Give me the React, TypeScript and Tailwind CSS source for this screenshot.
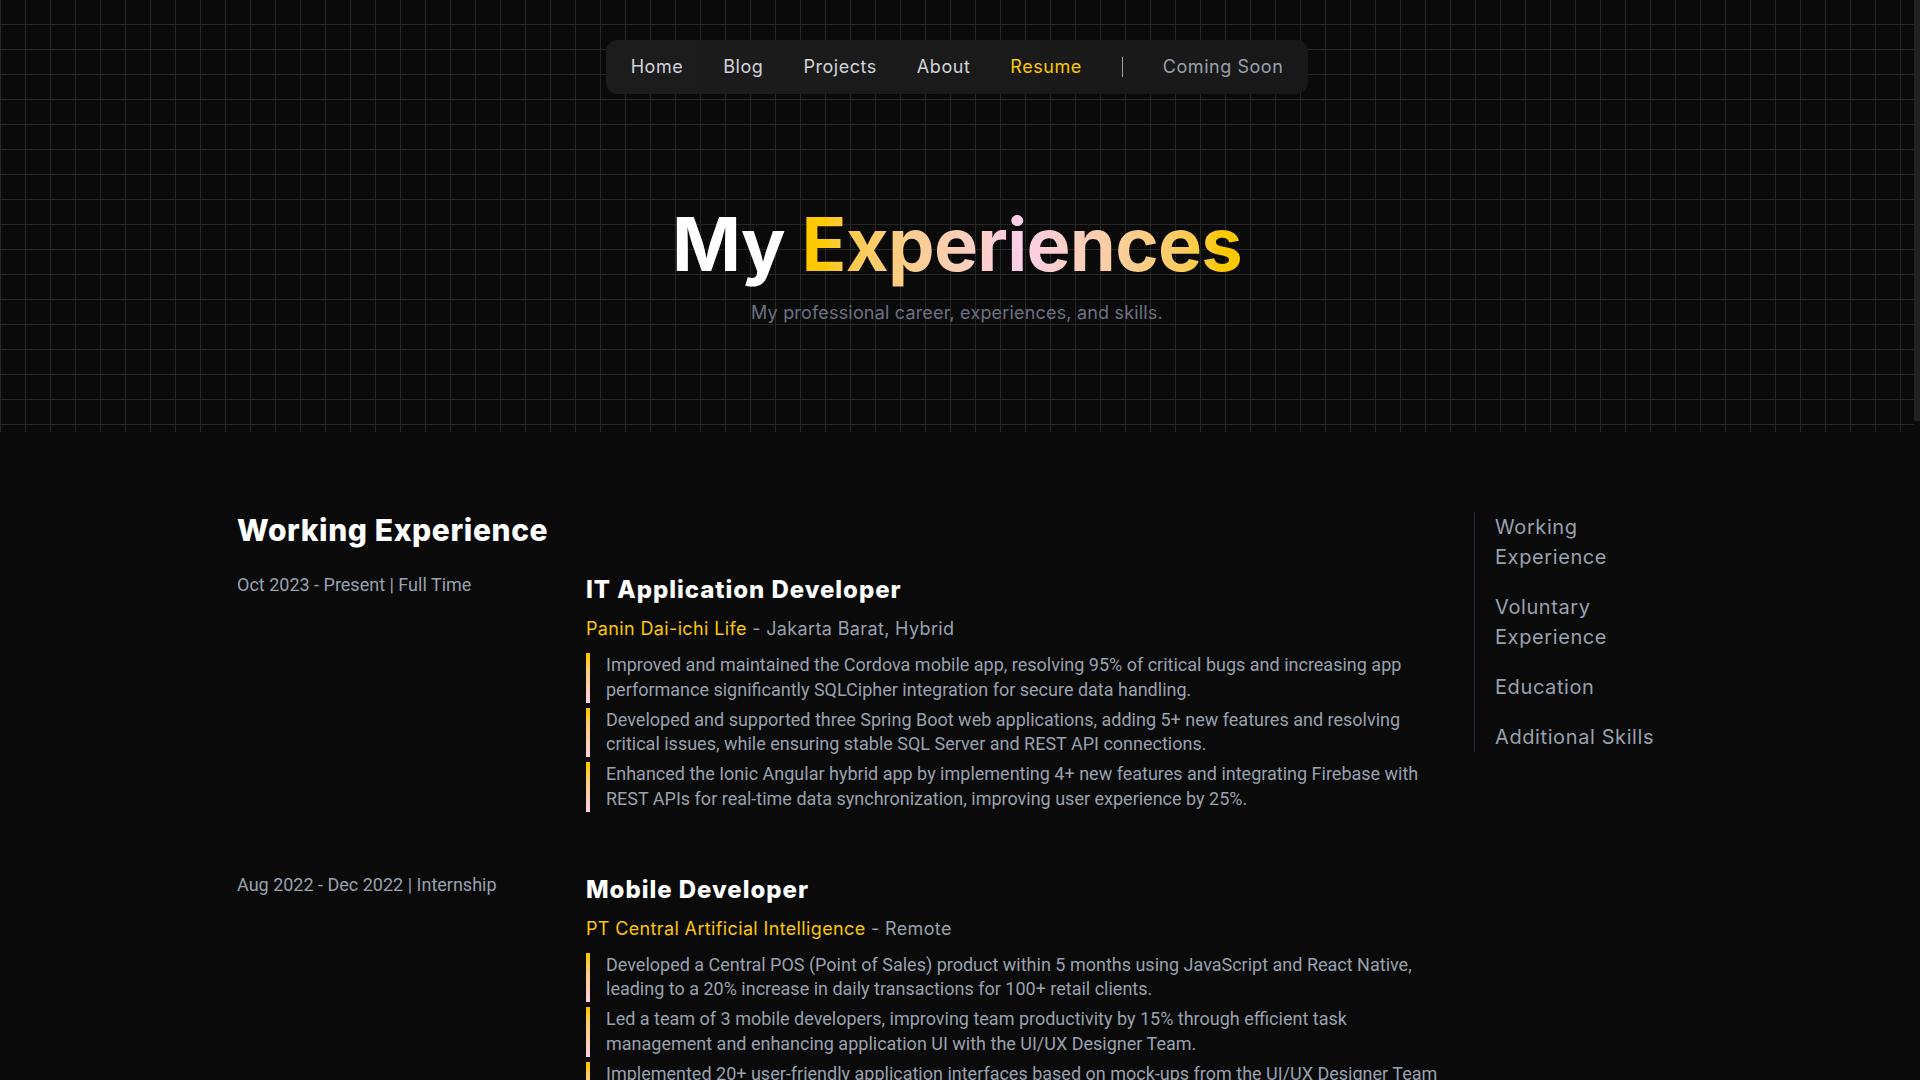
import React from 'react';

interface Job {
  period: string;
  title: string;
  company: string;
  place: string;
  points: string[];
}

const jobs: Job[] = [
  {
    period: 'Oct 2023 - Present | Full Time',
    title: 'IT Application Developer',
    company: 'Panin Dai-ichi Life',
    place: 'Jakarta Barat, Hybrid',
    points: [
      'Improved and maintained the Cordova mobile app, resolving 95% of critical bugs and increasing app performance significantly SQLCipher integration for secure data handling.',
      'Developed and supported three Spring Boot web applications, adding 5+ new features and resolving critical issues, while ensuring stable SQL Server and REST API connections.',
      'Enhanced the Ionic Angular hybrid app by implementing 4+ new features and integrating Firebase with REST APIs for real-time data synchronization, improving user experience by 25%.',
    ],
  },
  {
    period: 'Aug 2022 - Dec 2022 | Internship',
    title: 'Mobile Developer',
    company: 'PT Central Artificial Intelligence',
    place: 'Remote',
    points: [
      'Developed a Central POS (Point of Sales) product within 5 months using JavaScript and React Native, leading to a 20% increase in daily transactions for 100+ retail clients.',
      'Led a team of 3 mobile developers, improving team productivity by 15% through efficient task management and enhancing application UI with the UI/UX Designer Team.',
      'Implemented 20+ user-friendly application interfaces based on mock-ups from the UI/UX Designer Team to keep the design consistent across every screen of the product.',
    ],
  },
];

const navItems = ['Home', 'Blog', 'Projects', 'About'];
const sideLinks = ['Working Experience', 'Voluntary Experience', 'Education', 'Additional Skills'];

const JobRow = ({ job }: { job: Job }) => (
  <div className="grid grid-cols-[349px_1fr]">
    <p className="-mt-px font-['Roboto',sans-serif] text-lg leading-7 text-gray-400">{job.period}</p>
    <div>
      <h3 className="mt-[2px] font-['Inter',sans-serif] text-2xl leading-8 font-extrabold tracking-[0.04em] text-white">
        {job.title}
      </h3>
      <p className="mt-[9px] font-['Inter',sans-serif] text-lg leading-7 tracking-[0.02em] text-gray-400">
        <span className="text-yellow-400">{job.company}</span> - {job.place}
      </p>
      <div className="mt-[10px] flex flex-col gap-[5px]">
        {job.points.map((point) => (
          <div key={point} className="flex">
            <div className="w-1 shrink-0 bg-gradient-to-b from-yellow-400 to-pink-200" />
            <p className="pl-4 font-['Roboto',sans-serif] text-lg leading-[24.75px] text-gray-400">{point}</p>
          </div>
        ))}
      </div>
    </div>
  </div>
);

export default function App() {
  return (
    <div className="flex h-screen overflow-hidden bg-[#0a0a0a]">
      <div className="flex-1 overflow-hidden">
        {/* Hero with grid backdrop */}
        <header className="h-[432px] bg-[linear-gradient(to_right,#262626_1px,transparent_1px),linear-gradient(to_bottom,#262626_1px,transparent_1px)] bg-[size:25px_25px] bg-[position:0_-1px] pt-10">
          <nav className="mx-auto flex h-[54px] w-fit items-center gap-10 rounded-xl bg-gradient-to-r from-[#1c1c1c] to-[#181818] px-[25px] font-['Inter',sans-serif] text-lg tracking-[0.03em]">
            {navItems.map((item) => (
              <span key={item} className="text-gray-300">
                {item}
              </span>
            ))}
            <span className="text-yellow-400">Resume</span>
            <span className="h-5 w-px bg-gray-400" />
            <span className="text-gray-400">Coming Soon</span>
          </nav>

          <div className="mt-[113px] text-center">
            <h1 className="font-['Inter',sans-serif] text-[74px] leading-none font-bold tracking-[-0.01em] text-white">
              My{' '}
              <span className="bg-gradient-to-r from-yellow-400 via-pink-200 to-yellow-400 bg-clip-text text-transparent">
                Experiences
              </span>
            </h1>
            <p className="mt-[18px] font-['Inter',sans-serif] text-lg leading-7 tracking-[0.01em] text-gray-500">
              My professional career, experiences, and skills.
            </p>
          </div>
        </header>

        {/* Resume body */}
        <main className="mx-auto flex w-[1440px] gap-8 pt-20">
          <section className="flex-1">
            <h2 className="mb-6 font-['Inter',sans-serif] text-3xl leading-9 font-extrabold tracking-[0.02em] text-white">
              Working Experience
            </h2>
            <div className="flex flex-col gap-[60px]">
              {jobs.map((job) => (
                <JobRow key={job.title} job={job} />
              ))}
            </div>
          </section>

          <aside className="w-[203px] shrink-0">
            <ul className="flex w-[190px] flex-col gap-5 border-l border-slate-800 pl-5 font-['Inter',sans-serif] text-xl leading-[30px] tracking-[0.03em] text-gray-400">
              {sideLinks.map((link) => (
                <li key={link}>{link}</li>
              ))}
            </ul>
          </aside>
        </main>
      </div>

      {/* scrollbar */}
      <div className="w-[6px] shrink-0">
        <div className="h-[421px] bg-[#212121]" />
      </div>
    </div>
  );
}
